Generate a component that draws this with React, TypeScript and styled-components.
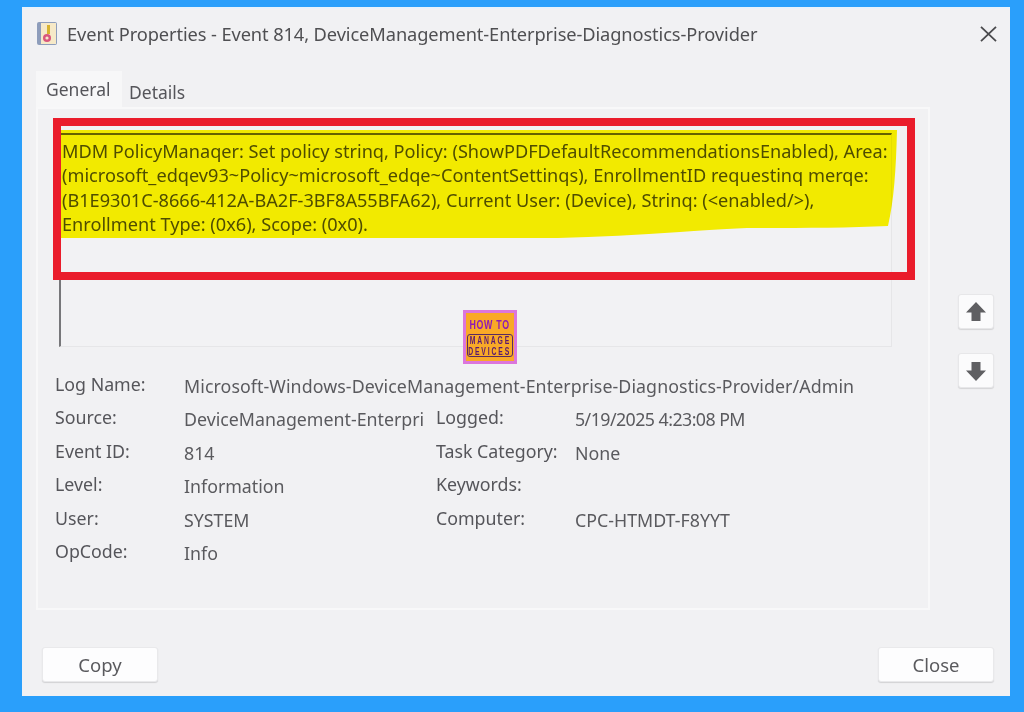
import React from "react";
import styled, { createGlobalStyle } from "styled-components";

const Global = createGlobalStyle`
  html, body { margin: 0; padding: 0; width: 1024px; height: 712px; overflow: hidden; background: #2a9ffb; }
`;

const Page = styled.div`
  width: 1024px;
  height: 712px;
  box-sizing: border-box;
  padding: 7px 14px 16px 22px;
  background: #2a9ffb;
  font-family: "Noto Sans", "Open Sans", sans-serif;
  color: #555558;
`;

const Dialog = styled.div`
  height: 100%;
  box-sizing: border-box;
  background: #f1f1f3;
  border-top: 2px solid #e8f2fb;
  display: flex;
  flex-direction: column;
  filter: blur(0.4px);
`;

const TitleBar = styled.div`
  display: flex;
  align-items: center;
  height: 49px;
  padding: 0 13px 0 14px;
  gap: 8px;
  flex: none;
`;

const Title = styled.div`
  flex: 1;
  font-size: 18.25px;
  letter-spacing: -0.1px;
  color: #4f4f52;
  white-space: nowrap;
`;

const Body = styled.div`
  flex: 1;
  display: flex;
  padding: 0 16px 0 14px;
  gap: 28px;
  min-height: 0;
`;

const MainColumn = styled.div`
  width: 894px;
  flex: none;
  display: flex;
  flex-direction: column;
`;

const Tabs = styled.div`
  display: flex;
  align-items: flex-end;
  height: 49px;
  flex: none;
`;

const Tab = styled.div<{ $active?: boolean }>`
  box-sizing: border-box;
  height: ${(p) => (p.$active ? 36 : 32)}px;
  width: ${(p) => (p.$active ? 86 : 68)}px;
  padding: ${(p) => (p.$active ? "6px 0 0 10px" : "5px 0 0 7px")};
  font-size: 17.5px;
  color: #55555a;
  background: ${(p) => (p.$active ? "#f7f7f8" : "#f1f1f3")};
`;

const Panel = styled.div`
  position: relative;
  flex: none;
  height: 503px;
  box-sizing: border-box;
  padding: 24px 36px 0 21px;
  border: 2px solid #f8f8f9;
`;

const MessageBox = styled.div`
  position: relative;
  height: 214px;
  box-sizing: border-box;
  padding: 4px 0 0 1px;
  border-top: 2px solid #66666a;
  border-left: 2px solid #77777a;
  border-right: 1px solid #e6e6e8;
  border-bottom: 1px solid #e6e6e8;
  background: #f2f2f4;
  font-size: 18.15px;
  line-height: 24.4px;
  color: #4f4f52;
  white-space: pre;
`;

const Highlight = styled.svg`
  position: absolute;
  left: -3px;
  top: -5px;
  mix-blend-mode: multiply;
  pointer-events: none;
`;

const RedBox = styled.div`
  position: absolute;
  left: 15px;
  top: 9px;
  width: 862px;
  height: 162px;
  box-sizing: border-box;
  border: 8px solid #ea1c2b;
  pointer-events: none;
`;

const Logo = styled.div`
  position: absolute;
  left: 425px;
  top: 201px;
  width: 54px;
  height: 54px;
  box-sizing: border-box;
  border: 3px solid #dc76dc;
  background: #f9a927;
  display: flex;
  flex-direction: column;
  align-items: center;
  font-family: "Liberation Sans", sans-serif;
  font-weight: 700;
`;

const LogoTop = styled.div`
  font-size: 13px;
  line-height: 13px;
  letter-spacing: 1px;
  margin-top: 5px;
  color: #8f1cb4;
  transform: scaleX(0.68);
  white-space: nowrap;
`;

const LogoFrame = styled.div`
  margin-top: 3px;
  width: 46px;
  height: 23px;
  flex: none;
  box-sizing: border-box;
  border: 1px solid #5a2a60;
  border-radius: 3px;
  display: flex;
  flex-direction: column;
  align-items: center;
`;

const LogoLine = styled.div`
  font-size: 11px;
  line-height: 10.5px;
  letter-spacing: 3px;
  color: #5a1a70;
  transform: scaleX(0.62);
  white-space: nowrap;
`;

const Details = styled.div`
  display: grid;
  grid-template-columns: 129px 252px 139px 1fr;
  grid-auto-rows: 33.4px;
  margin: 0 -20px 0 -4px;
  padding: 22px 0 0 0;
  font-size: 17.8px;
  line-height: 33px;
  white-space: nowrap;
`;

const Label = styled.div`
  color: #55555a;
  margin-top: -1px;
`;

const Value = styled.div<{ $span?: number; $tight?: boolean }>`
  color: #5a5a5e;
  padding-top: 1px;
  ${(p) => (p.$span ? `grid-column: span ${p.$span}; letter-spacing: 0.08px;` : "")}
  ${(p) => (p.$tight ? "letter-spacing: -0.55px;" : "")}
  overflow: hidden;
`;

const SideColumn = styled.div`
  padding-top: 236px;
  display: flex;
  flex-direction: column;
  gap: 24px;
  align-items: flex-end;
  flex: 1;
`;

const ArrowButton = styled.div`
  width: 36px;
  height: 35px;
  border-radius: 3px;
  background: #fbfbfc;
  border: 1px solid #e7e7e9;
  box-shadow: 0 1px 1px #d4d4d6;
  box-sizing: border-box;
  display: flex;
  align-items: center;
  justify-content: center;
`;

const Footer = styled.div`
  display: flex;
  justify-content: space-between;
  flex: none;
  padding: 0 16px 0 20px;
  height: 49px;
`;

const Button = styled.div`
  width: 116px;
  height: 35px;
  box-sizing: border-box;
  border-radius: 3px;
  background: #fdfdfe;
  border: 1px solid #e9e9eb;
  box-shadow: 0 1px 1px #d2d2d4;
  display: flex;
  align-items: center;
  justify-content: center;
  font-size: 18.5px;
  color: #5a5a5e;
`;

const AppIcon = () => (
  <svg width="23" height="25" viewBox="0 0 23 25">
    <rect x="1" y="1" width="20" height="23" rx="2" fill="#8e9dbb" />
    <rect x="5" y="2" width="15" height="21" fill="#f6e9c8" />
    <rect x="11" y="4" width="3" height="9" fill="#d7b22f" />
    <circle cx="11" cy="17" r="4" fill="#d9567c" />
    <circle cx="11" cy="17" r="1.6" fill="#f6e9c8" />
  </svg>
);

const CloseIcon = () => (
  <svg width="17" height="16" viewBox="0 0 17 16" fill="none" stroke="#4a4a4d" strokeWidth="1.8">
    <path d="M1 .8 16 15.2M16 .8 1 15.2" />
  </svg>
);

const UpIcon = () => (
  <svg width="22" height="22" viewBox="0 0 22 22">
    <path d="M11 1 21 11.5H15.5V20H6.5V11.5H1Z" fill="#5f5f62" />
  </svg>
);

const DownIcon = () => (
  <svg width="22" height="22" viewBox="0 0 22 22">
    <path d="M6.5 2H15.5V10.5H21L11 21 1 10.5H6.5Z" fill="#5f5f62" />
  </svg>
);

const message = `MDM PolicyManaqer: Set policy strinq, Policy: (ShowPDFDefaultRecommendationsEnabled), Area:
(microsoft_edqev93~Policy~microsoft_edqe~ContentSettinqs), EnrollmentID requestinq merqe:
(B1E9301C-8666-412A-BA2F-3BF8A55BFA62), Current User: (Device), Strinq: (<enabled/>),
Enrollment Type: (0x6), Scope: (0x0).`;

export default function App() {
  return (
    <Page>
      <Global />
      <Dialog>
        <TitleBar>
          <AppIcon />
          <Title>Event Properties - Event 814, DeviceManagement-Enterprise-Diagnostics-Provider</Title>
          <CloseIcon />
        </TitleBar>
        <Body>
          <MainColumn>
            <Tabs>
              <Tab $active>General</Tab>
              <Tab>Details</Tab>
            </Tabs>
            <Panel>
              <MessageBox>
                {message}
                <Highlight width="839" height="108" viewBox="0 0 839 108">
                  <path
                    d="M0 0H839C838 40 836 70 830 96C790 98 740 98 689 98C660 99 640 101 622 102C580 105 540 107 500 108H0Z"
                    fill="#fff700"
                  />
                </Highlight>
              </MessageBox>
              <RedBox />
              <Logo>
                <LogoTop>HOW TO</LogoTop>
                <LogoFrame>
                  <LogoLine>MANAGE</LogoLine>
                  <LogoLine>DEVICES</LogoLine>
                </LogoFrame>
              </Logo>
              <Details>
                <Label>Log Name:</Label>
                <Value $span={3}>Microsoft-Windows-DeviceManagement-Enterprise-Diagnostics-Provider/Admin</Value>
                <Label>Source:</Label>
                <Value>DeviceManagement-Enterpri</Value>
                <Label>Logged:</Label>
                <Value $tight>5/19/2025 4:23:08 PM</Value>
                <Label>Event ID:</Label>
                <Value>814</Value>
                <Label>Task Category:</Label>
                <Value>None</Value>
                <Label>Level:</Label>
                <Value>Information</Value>
                <Label>Keywords:</Label>
                <Value />
                <Label>User:</Label>
                <Value>SYSTEM</Value>
                <Label>Computer:</Label>
                <Value>CPC-HTMDT-F8YYT</Value>
                <Label>OpCode:</Label>
                <Value>Info</Value>
              </Details>
            </Panel>
          </MainColumn>
          <SideColumn>
            <ArrowButton>
              <UpIcon />
            </ArrowButton>
            <ArrowButton>
              <DownIcon />
            </ArrowButton>
          </SideColumn>
        </Body>
        <Footer>
          <Button>Copy</Button>
          <Button>Close</Button>
        </Footer>
      </Dialog>
    </Page>
  );
}
